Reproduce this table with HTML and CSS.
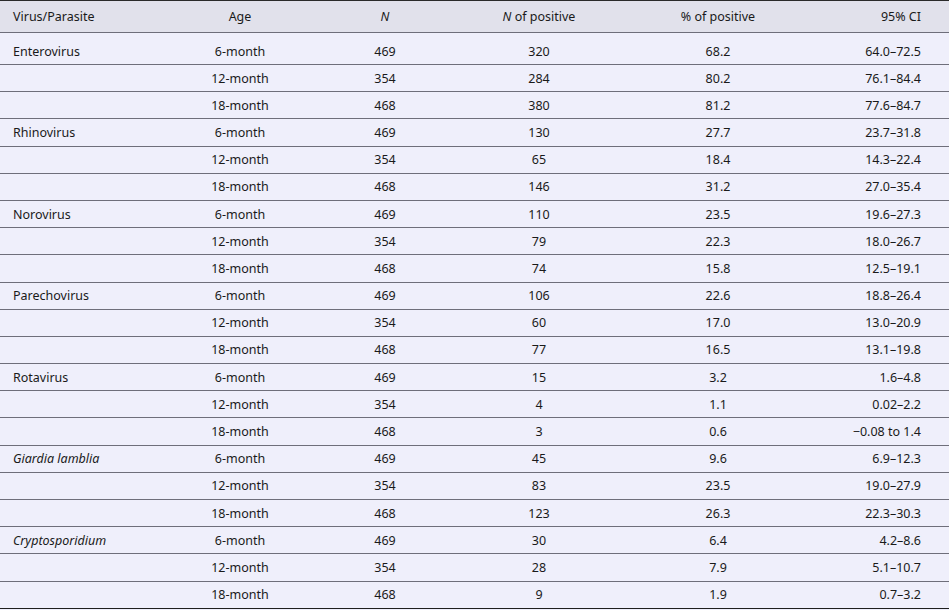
FILE: index.html
```html
<!DOCTYPE html>
<html>
<head>
<meta charset="utf-8">
<link rel="stylesheet" href="styles.css">
</head>
<body>
<div class="table">
  <div class="row head">
    <div class="c1">Virus/Parasite</div><div class="cc">Age</div><div class="cc"><i>N</i></div><div class="cc"><i>N</i> of positive</div><div class="cc">% of positive</div><div class="cr">95% CI</div>
  </div>
  <div class="row first"><div class="c1">Enterovirus</div><div class="cc">6-month</div><div class="cc">469</div><div class="cc">320</div><div class="cc">68.2</div><div class="cr">64.0–72.5</div></div>
  <div class="row"><div class="c1"></div><div class="cc">12-month</div><div class="cc">354</div><div class="cc">284</div><div class="cc">80.2</div><div class="cr">76.1–84.4</div></div>
  <div class="row"><div class="c1"></div><div class="cc">18-month</div><div class="cc">468</div><div class="cc">380</div><div class="cc">81.2</div><div class="cr">77.6–84.7</div></div>
  <div class="row"><div class="c1">Rhinovirus</div><div class="cc">6-month</div><div class="cc">469</div><div class="cc">130</div><div class="cc">27.7</div><div class="cr">23.7–31.8</div></div>
  <div class="row"><div class="c1"></div><div class="cc">12-month</div><div class="cc">354</div><div class="cc">65</div><div class="cc">18.4</div><div class="cr">14.3–22.4</div></div>
  <div class="row"><div class="c1"></div><div class="cc">18-month</div><div class="cc">468</div><div class="cc">146</div><div class="cc">31.2</div><div class="cr">27.0–35.4</div></div>
  <div class="row"><div class="c1">Norovirus</div><div class="cc">6-month</div><div class="cc">469</div><div class="cc">110</div><div class="cc">23.5</div><div class="cr">19.6–27.3</div></div>
  <div class="row"><div class="c1"></div><div class="cc">12-month</div><div class="cc">354</div><div class="cc">79</div><div class="cc">22.3</div><div class="cr">18.0–26.7</div></div>
  <div class="row"><div class="c1"></div><div class="cc">18-month</div><div class="cc">468</div><div class="cc">74</div><div class="cc">15.8</div><div class="cr">12.5–19.1</div></div>
  <div class="row"><div class="c1">Parechovirus</div><div class="cc">6-month</div><div class="cc">469</div><div class="cc">106</div><div class="cc">22.6</div><div class="cr">18.8–26.4</div></div>
  <div class="row"><div class="c1"></div><div class="cc">12-month</div><div class="cc">354</div><div class="cc">60</div><div class="cc">17.0</div><div class="cr">13.0–20.9</div></div>
  <div class="row"><div class="c1"></div><div class="cc">18-month</div><div class="cc">468</div><div class="cc">77</div><div class="cc">16.5</div><div class="cr">13.1–19.8</div></div>
  <div class="row"><div class="c1">Rotavirus</div><div class="cc">6-month</div><div class="cc">469</div><div class="cc">15</div><div class="cc">3.2</div><div class="cr">1.6–4.8</div></div>
  <div class="row"><div class="c1"></div><div class="cc">12-month</div><div class="cc">354</div><div class="cc">4</div><div class="cc">1.1</div><div class="cr">0.02–2.2</div></div>
  <div class="row"><div class="c1"></div><div class="cc">18-month</div><div class="cc">468</div><div class="cc">3</div><div class="cc">0.6</div><div class="cr">−0.08 to 1.4</div></div>
  <div class="row"><div class="c1"><i>Giardia lamblia</i></div><div class="cc">6-month</div><div class="cc">469</div><div class="cc">45</div><div class="cc">9.6</div><div class="cr">6.9–12.3</div></div>
  <div class="row"><div class="c1"></div><div class="cc">12-month</div><div class="cc">354</div><div class="cc">83</div><div class="cc">23.5</div><div class="cr">19.0–27.9</div></div>
  <div class="row"><div class="c1"></div><div class="cc">18-month</div><div class="cc">468</div><div class="cc">123</div><div class="cc">26.3</div><div class="cr">22.3–30.3</div></div>
  <div class="row"><div class="c1"><i>Cryptosporidium</i></div><div class="cc">6-month</div><div class="cc">469</div><div class="cc">30</div><div class="cc">6.4</div><div class="cr">4.2–8.6</div></div>
  <div class="row"><div class="c1"></div><div class="cc">12-month</div><div class="cc">354</div><div class="cc">28</div><div class="cc">7.9</div><div class="cr">5.1–10.7</div></div>
  <div class="row last"><div class="c1"></div><div class="cc">18-month</div><div class="cc">468</div><div class="cc">9</div><div class="cc">1.9</div><div class="cr">0.7–3.2</div></div>
</div>
</body>
</html>
```
FILE: styles.css
```css
html, body {
  margin: 0;
  padding: 0;
  background: #efeffb;
}
.table {
  width: 949px;
  font-family: "Noto Sans", sans-serif;
  font-size: 12.5px;
  color: #1a1a1a;
  background: #efeffb;
  border-top: 1px solid #2a2a2a;
}
.row {
  display: grid;
  grid-template-columns: 170px 140px 150px 158px 200px 1fr;
  align-items: center;
  box-sizing: border-box;
  height: 27.2px;
  border-bottom: 1px solid #6e6e7a;
}
.row.head {
  height: 32px;
  background: #e1e1eb;
}
.row.first {
  height: 32px;
  padding-top: 5px;
}
.row.last {
  border-bottom-color: #1e1e1e;
}
.c1 {
  padding-left: 13px;
}
.cc {
  text-align: center;
}
.cr {
  text-align: right;
  padding-right: 28px;
}
```
